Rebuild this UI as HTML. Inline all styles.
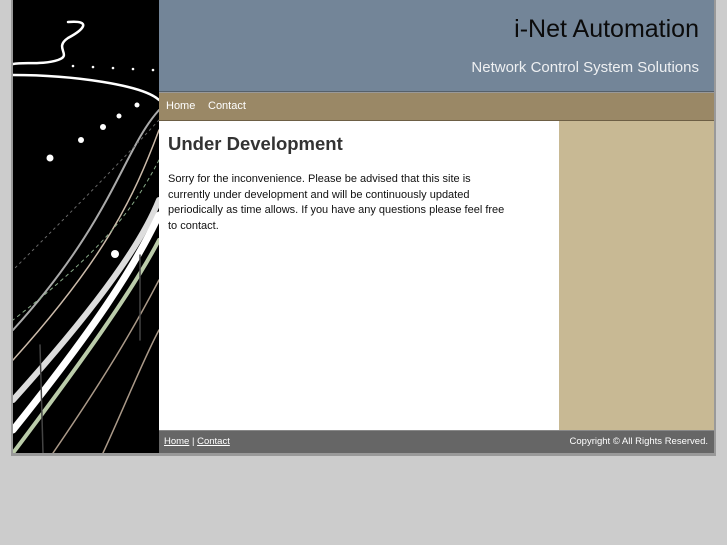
<!DOCTYPE html>
<html><head><meta charset="utf-8"><style>
*{margin:0;padding:0;box-sizing:border-box}
body{width:727px;height:545px;background:#cccccc;font-family:"Liberation Sans",sans-serif;position:relative;overflow:hidden}
#wrap{position:absolute;left:11px;top:0;width:705px;height:456px;background:#999}
#blk{position:absolute;left:13px;top:0;width:146px;height:453px;border-left:146px solid #000;background:#000}
#img{position:absolute;left:13px;top:0;width:146px;height:453px;overflow:hidden}
#hdr{position:absolute;left:159px;top:0;width:555px;height:92px;background:#738598;border-bottom:1px solid #56606a}
#hdr h1{position:absolute;right:15px;top:15px;font-weight:normal;font-size:25px;color:#0b0b0b}
#hdr h2{position:absolute;right:15px;top:59px;font-weight:normal;font-size:15px;color:#eef0f2}
#nav{position:absolute;left:159px;top:93px;width:555px;height:28px;background:#9a8866;border-bottom:1px solid #6d5f45}
#nav a{position:absolute;top:7px;font-size:11px;color:#fff;text-decoration:none}
#main{position:absolute;left:159px;top:121px;width:400px;height:309px;background:#fff}
#main h3{position:absolute;left:9px;top:12px;font-size:18.5px;color:#333}
#main p{position:absolute;left:9px;top:51px;width:340px;font-size:11px;line-height:15.5px;color:#111}
#side{position:absolute;left:559px;top:121px;width:155px;height:309px;background:#c8b994}
#ftr{position:absolute;left:159px;top:430px;width:555px;height:23px;background:#666;border-top:1px solid #888}
#ftr .l{position:absolute;left:5px;top:5px;font-size:9.5px;color:#fff}
#ftr .r{position:absolute;right:6px;top:5px;font-size:9.5px;color:#fff}
</style></head><body>
<div id="wrap"></div>
<div id="blk"></div>
<div id="img">
<svg width="146" height="453" viewBox="0 0 146 453" style="background:#000">
<rect x="0" y="0" width="146" height="453" fill="black"/>
<g fill="none" stroke-linecap="round">
<path d="M55 22 C80 20,70 30,55 38 C40 48,60 55,45 60 C30 65,10 62,0 64" stroke="#fff" stroke-width="2.5"/>
<path d="M0 75 C60 75,130 85,146 100" stroke="#fff" stroke-width="2.5"/>
<path d="M146 110 C110 150,100 220,0 330" stroke="#aaa" stroke-width="2"/>
<path d="M146 130 C120 200,90 260,0 360" stroke="#cba" stroke-width="1.5"/>
<path d="M146 200 C130 240,90 300,0 400" stroke="#ddd" stroke-width="6"/>
<path d="M146 215 C120 270,80 330,0 430" stroke="#fff" stroke-width="7"/>
<path d="M146 240 C120 290,70 360,0 453" stroke="#bca" stroke-width="4"/>
<path d="M146 280 C120 330,90 380,40 453" stroke="#a98" stroke-width="1.5"/>
<path d="M146 330 C130 360,110 410,90 453" stroke="#a98" stroke-width="1.5"/>
<path d="M146 160 C120 210,90 250,0 320" stroke="#8a8" stroke-width="1" stroke-dasharray="3 4"/>
<path d="M146 120 C100 170,60 210,0 270" stroke="#666" stroke-width="1" stroke-dasharray="2 4"/>
<path d="M127 255 L127 340 M27 345 L30 453" stroke="#444" stroke-width="1.5"/>
</g>
<g fill="#fff">
<circle cx="124" cy="105" r="2.5"/><circle cx="106" cy="116" r="2.5"/><circle cx="90" cy="127" r="3"/>
<circle cx="68" cy="140" r="3"/><circle cx="37" cy="158" r="3.5"/><circle cx="102" cy="254" r="4"/>
<circle cx="60" cy="66" r="1.3"/><circle cx="80" cy="67" r="1.3"/><circle cx="100" cy="68" r="1.3"/><circle cx="120" cy="69" r="1.3"/><circle cx="140" cy="70" r="1.3"/>
</g>
</svg>
</div>
<div id="hdr"><h1>i-Net Automation</h1><h2>Network Control System Solutions</h2></div>
<div id="nav"><a style="left:7px">Home</a><a style="left:49px">Contact</a></div>
<div id="main"><h3>Under Development</h3>
<p>Sorry for the inconvenience. Please be advised that this site is currently under development and will be continuously updated periodically as time allows. If you have any questions please feel free to contact.</p></div>
<div id="side"></div>
<div id="ftr"><span class="l"><u>Home</u> | <u>Contact</u></span><span class="r">Copyright © All Rights Reserved.</span></div>
</body></html>
